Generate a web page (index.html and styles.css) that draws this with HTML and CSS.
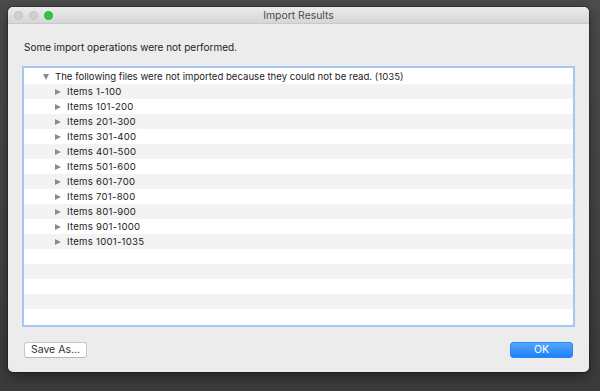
FILE: index.html
```html
<!DOCTYPE html>
<html>
<head>
<meta charset="utf-8">
<link rel="stylesheet" href="styles.css">
</head>
<body>
<div class="window">
  <div class="titlebar">
    <div class="lights">
      <span class="light gray"></span>
      <span class="light gray"></span>
      <span class="light green"></span>
    </div>
    <div class="title">Import Results</div>
  </div>
  <div class="content">
    <div class="message">Some import operations were not performed.</div>
    <div class="tree">
      <div class="row parent"><span class="tri down"></span><span class="label">The following files were not imported because they could not be read. (1035)</span></div>
      <div class="row child"><span class="tri right"></span><span class="label">Items 1-100</span></div>
      <div class="row child"><span class="tri right"></span><span class="label">Items 101-200</span></div>
      <div class="row child"><span class="tri right"></span><span class="label">Items 201-300</span></div>
      <div class="row child"><span class="tri right"></span><span class="label">Items 301-400</span></div>
      <div class="row child"><span class="tri right"></span><span class="label">Items 401-500</span></div>
      <div class="row child"><span class="tri right"></span><span class="label">Items 501-600</span></div>
      <div class="row child"><span class="tri right"></span><span class="label">Items 601-700</span></div>
      <div class="row child"><span class="tri right"></span><span class="label">Items 701-800</span></div>
      <div class="row child"><span class="tri right"></span><span class="label">Items 801-900</span></div>
      <div class="row child"><span class="tri right"></span><span class="label">Items 901-1000</span></div>
      <div class="row child"><span class="tri right"></span><span class="label">Items 1001-1035</span></div>
      <div class="row"></div>
      <div class="row"></div>
      <div class="row"></div>
      <div class="row"></div>
      <div class="row"></div>
    </div>
    <div class="buttons">
      <button class="btn">Save As...</button>
      <button class="btn primary">OK</button>
    </div>
  </div>
</div>
</body>
</html>
```
FILE: styles.css
```css
html, body {
  margin: 0;
  padding: 0;
}
body {
  width: 600px;
  height: 391px;
  box-sizing: border-box;
  padding: 7px 0 0 8px;
  background: linear-gradient(180deg, #4c4c4c 0%, #444 60%, #3b3b3b 100%);
  font-family: "Inter", "Liberation Sans", sans-serif;
  overflow: hidden;
}
.window {
  width: 581px;
  height: 365px;
  background: #ececec;
  border-radius: 5px;
  box-shadow: 0 4px 14px rgba(0,0,0,0.45), 0 0 0 1px rgba(0,0,0,0.25);
  display: flex;
  flex-direction: column;
  overflow: hidden;
}
.titlebar {
  height: 16px;
  border-bottom: 1px solid #c9c9c9;
  background: linear-gradient(180deg, #ebebeb 0%, #d6d6d6 100%);
  border-radius: 5px 5px 0 0;
  display: flex;
  align-items: center;
  position: relative;
}
.lights {
  display: flex;
  gap: 6px;
  padding-left: 6px;
  padding-top: 1px;
}
.light {
  width: 9px;
  height: 9px;
  border-radius: 50%;
  box-sizing: border-box;
}
.light.gray {
  background: #d0d0d0;
  border: 1px solid #c3c3c3;
}
.light.green {
  background: #2ac840;
  border: 1px solid #22b233;
}
.title {
  position: absolute;
  left: 0;
  right: 0;
  top: 0;
  bottom: 0;
  text-align: center;
  line-height: 17px;
  font-size: 10.4px;
  color: #4d4d4d;
  pointer-events: none;
}
.content {
  flex: 1;
  display: flex;
  flex-direction: column;
  padding: 17px 14px 14px 14px;
}
.message {
  height: 13px;
  line-height: 13px;
  font-size: 10px;
  color: #222;
  padding-left: 2px;
  margin-bottom: 12px;
}
.tree {
  height: 261px;
  box-sizing: border-box;
  border: 2px solid #a6c6f3;
  background: #fff;
  padding-top: 1px;
  overflow: hidden;
}
.row {
  height: 15px;
  display: flex;
  align-items: center;
  font-size: 9.6px;
  color: #222;
}
.row:nth-child(even) {
  background: #f3f3f3;
}
.row.parent {
  padding-left: 19px;
}
.row.child {
  padding-left: 31px;
}
.row.child .label {
  letter-spacing: 0.25px;
}
.tri {
  width: 0;
  height: 0;
}
.tri.down {
  border-left: 3.5px solid transparent;
  border-right: 3.5px solid transparent;
  border-top: 6px solid #8c8c8c;
  margin-right: 6px;
}
.tri.right {
  border-top: 3.5px solid transparent;
  border-bottom: 3.5px solid transparent;
  border-left: 6px solid #8c8c8c;
  margin-right: 6px;
}
.buttons {
  margin-top: 15px;
  display: flex;
  justify-content: space-between;
  padding: 0 2px;
}
.btn {
  width: 63px;
  height: 16px;
  box-sizing: border-box;
  border-radius: 3px;
  font-family: inherit;
  font-size: 10.5px;
  line-height: 14px;
  padding: 0;
  background: #fff;
  color: #333;
  border: 1px solid #c6c6c6;
  border-bottom-color: #b8b8b8;
}
.btn.primary {
  background: linear-gradient(180deg, #55a6fc 0%, #1d80f8 100%);
  border: 1px solid #2c87f5;
  color: #fff;
}
```
